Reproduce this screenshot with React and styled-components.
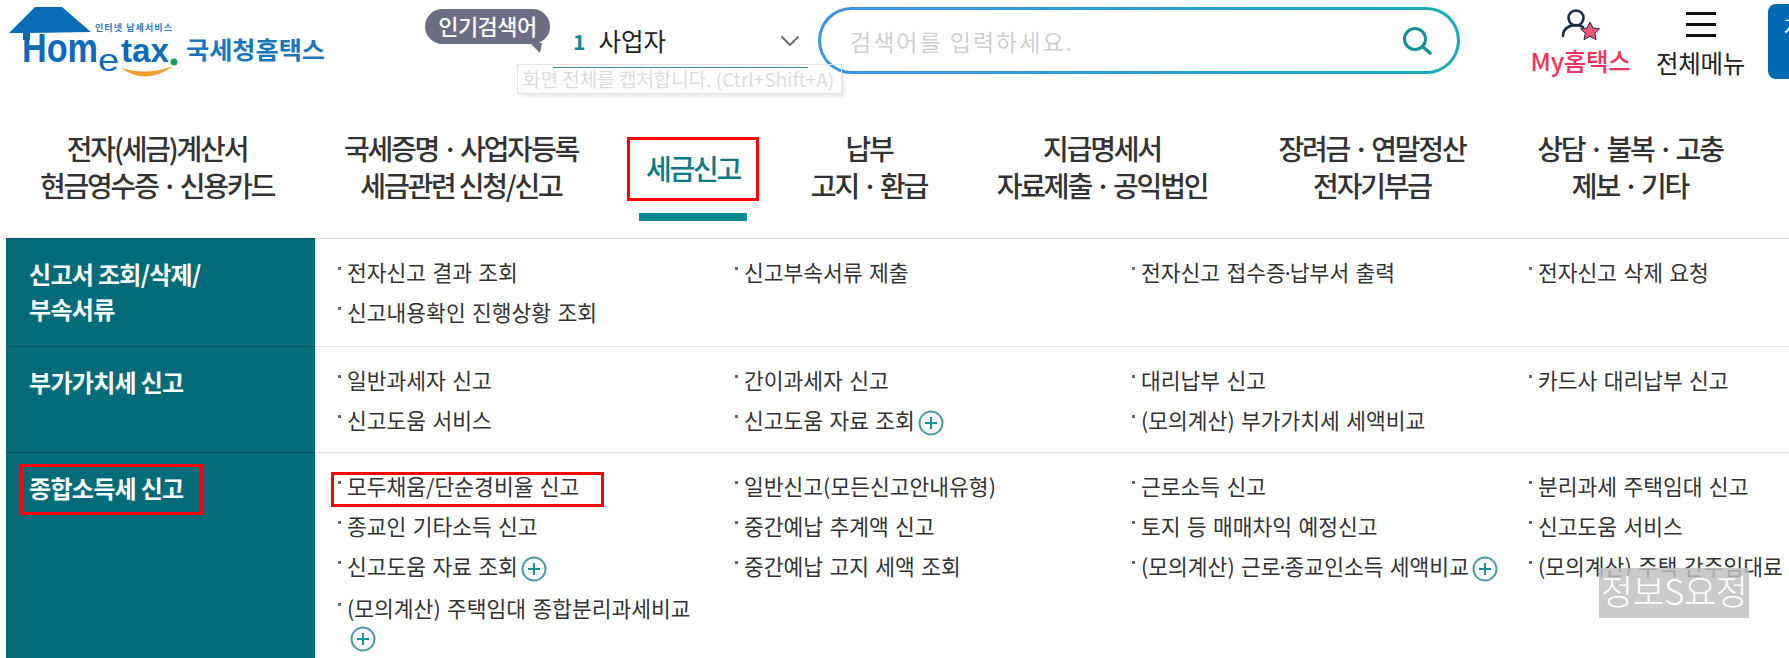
import React from 'react'
import styled, { createGlobalStyle } from 'styled-components'

const FONT = `"Noto Sans CJK KR", "Noto Sans", "Liberation Sans", sans-serif`

const GlobalStyle = createGlobalStyle`
  html, body {
    margin: 0;
    height: 658px;
    overflow: hidden;
    background: #fff;
    font-family: ${FONT};
  }
`

const Page = styled.div`
  width: 1789px;
  height: 658px;
  overflow: hidden;
  position: relative;
`

const Header = styled.header`
  display: flex;
  align-items: flex-start;
  height: 130px;
`

const LogoMark = styled.svg`
  display: block;
  flex: none;
  width: 330px;
  height: 84px;
`

const Bubble = styled.div`
  position: relative;
  flex: none;
  width: 125px;
  height: 35px;
  margin: 9px 0 0 95px;
  border-radius: 18px;
  background: #6b6d85;
  color: #fff;
  font-size: 22px;
  font-weight: 500;
  line-height: 33px;
  text-align: center;
  letter-spacing: -0.5px;

  &::after {
    content: '';
    position: absolute;
    right: 8px;
    bottom: -9px;
    border-top: 10px solid #6b6d85;
    border-left: 10px solid transparent;
    border-right: 2px solid transparent;
  }
`

const Rolling = styled.div`
  position: relative;
  flex: none;
  display: flex;
  align-items: center;
  box-sizing: border-box;
  width: 255px;
  height: 68px;
  margin-left: 3px;
  padding: 14px 8px 0 20px;
  border-bottom: 1px solid #3d97a8;
`

const RankNo = styled.span`
  color: #0b8a9a;
  font-size: 21px;
  font-weight: 700;
  margin-right: 13px;
`

const RankWord = styled.span`
  flex: 1;
  color: #222;
  font-size: 24.5px;
`

const Tip = styled.div`
  position: absolute;
  left: -36px;
  top: 64px;
  box-sizing: border-box;
  width: 325px;
  height: 30px;
  padding-left: 5px;
  border: 1px solid #e4e4e4;
  box-shadow: 3px 3px 3px rgba(0, 0, 0, 0.08);
  color: #dcdcdc;
  font-size: 19px;
  line-height: 27px;
  white-space: nowrap;
`

const Search = styled.div`
  flex: none;
  display: flex;
  align-items: center;
  justify-content: space-between;
  box-sizing: border-box;
  width: 642px;
  height: 67px;
  margin: 7px 0 0 10px;
  padding: 0 25px 0 29px;
  border: 3px solid transparent;
  border-radius: 34px;
  background: linear-gradient(#fff, #fff) padding-box,
    linear-gradient(90deg, #3b94e6, #15adbb) border-box;
`

const Placeholder = styled.span`
  color: #cfcfcf;
  font-size: 23px;
  letter-spacing: 2px;
`

const IconBlock = styled.div`
  flex: none;
  display: flex;
  flex-direction: column;
  align-items: center;
  width: ${({ $w }) => $w}px;
  margin: 8px 0 0 ${({ $ml }) => $ml}px;
`

const IconLabel = styled.span`
  margin-top: ${({ $mt }) => $mt}px;
  color: ${({ $red }) => ($red ? '#f0325e' : '#222')};
  font-size: 24.5px;
  font-weight: ${({ $red }) => ($red ? 500 : 400)};
  line-height: 30px;
  white-space: nowrap;
  letter-spacing: -0.3px;
`

const MenuLines = styled.div`
  display: flex;
  flex-direction: column;
  gap: 8px;
  width: 30px;
  margin-top: 4px;

  i {
    display: block;
    height: 3px;
    background: #111;
  }
`

const CornerButton = styled.div`
  flex: none;
  box-sizing: border-box;
  width: 60px;
  height: 75px;
  margin: 4px 0 0 23px;
  padding: 8px 0 0 16px;
  border-radius: 8px;
  background: #0069b4;
  color: #fff;
  font-size: 20px;
`

const Nav = styled.nav`
  display: grid;
  grid-template-columns: 304px 304px 160px 192px 274px 266px 250px;
  height: 108px;
  margin-left: 5px;
`

const NavItem = styled.div`
  display: flex;
  flex-direction: column;
  align-items: center;
  color: #333;
  font-size: 28px;
  font-weight: 500;
  line-height: 37px;
  letter-spacing: -2.2px;
  text-align: center;
  white-space: nowrap;
`

const NavLabel = styled.div`
  white-space: pre-line;
`

const ActiveBox = styled.div`
  box-sizing: border-box;
  width: 132px;
  height: 64px;
  margin-top: 7px;
  border: 3px solid #f00;
  color: #0b7a85;
  line-height: 56px;
`

const ActiveBar = styled.div`
  width: 108px;
  height: 8px;
  margin-top: 12px;
  background: #008a94;
`

const Section = styled.section`
  display: grid;
  grid-template-columns: 309px 1fr;
  margin-left: 6px;
`

const Label = styled.h3`
  position: relative;
  box-sizing: border-box;
  margin: 0;
  padding: 17px 0 0 23px;
  border-top: 1px solid #0a4f57;
  background: #036c78;
  color: #fff;
  font-size: 24px;
  font-weight: 700;
  line-height: 35px;
  letter-spacing: -0.7px;
  white-space: pre-line;
`

const Marked = styled.span`
  &::after {
    content: '';
    position: absolute;
    left: 14px;
    top: 11px;
    width: 183px;
    height: 51px;
    box-sizing: border-box;
    border: 3px solid #f00;
  }
`

const List = styled.ul`
  display: grid;
  grid-template-columns: repeat(4, 397px);
  align-content: start;
  margin: 0;
  padding: 13px 0 ${({ $pb }) => $pb}px 22px;
  border-top: 1px solid #ddd;
  list-style: none;
`

const Item = styled.li`
  position: relative;
  display: flex;
  box-sizing: border-box;
  padding: 6px 24px 6px 0;
  color: #333;
  font-size: 21.5px;
  word-spacing: 1.5px;
  line-height: 28px;
  min-height: 40px;

  ${({ $marked }) =>
    $marked &&
    `
    &::after {
      content: '';
      position: absolute;
      left: -6px;
      top: 6px;
      width: 273px;
      height: 35px;
      box-sizing: border-box;
      border: 3px solid #f00;
    }
  `}
`

const Bullet = styled.i`
  flex: none;
  width: 3px;
  height: 3px;
  margin: 9px 6px 0 1px;
  background: #666;
`

const ItemText = styled.span`
  white-space: ${({ $nowrap }) => ($nowrap ? 'nowrap' : 'normal')};
`

const TightDot = styled.span`
  margin: 0 -4px;
`

const PlusIcon = styled.svg`
  display: inline-block;
  width: 26px;
  height: 26px;
  margin-left: 3px;
  vertical-align: -7px;
`

const Stamp = styled.div`
  position: absolute;
  left: 1599px;
  top: 568px;
  width: 150px;
  height: 50px;
  background: rgba(190, 190, 190, 0.82);
  color: #fff;
  font-size: 35px;
  font-weight: 300;
  line-height: 44px;
  text-align: center;
  white-space: nowrap;
  letter-spacing: -0.5px;
`

const Logo = () => (
  <LogoMark viewBox="0 0 330 84">
    <polygon points="35,7 62,7 91,32 30,33 30,40 23,40 23,33 9,33" fill="#0a6cb8" />
    <path d="M121 68 Q147 86 173 66 Q147 76 121 68 Z" fill="#f0a030" />
    <circle cx="174" cy="62" r="3.5" fill="#1aa053" />
    <text x="95" y="31" fontSize="9" fontWeight="700" fill="#2a7cc4" fontFamily={FONT} textLength="77">
      인터넷 납세서비스
    </text>
    <text x="22" y="62" fontSize="40" fontWeight="700" fill="#0a6cb8" fontFamily="'Liberation Sans', sans-serif" textLength="76" lengthAdjust="spacingAndGlyphs">
      Hom
    </text>
    <text x="98" y="71" fontSize="32" fontWeight="400" fill="#0a6cb8" fontFamily="'Liberation Sans', sans-serif" textLength="21" lengthAdjust="spacingAndGlyphs">
      e
    </text>
    <text x="121" y="62" fontSize="34" fontWeight="700" fill="#0a6cb8" fontFamily="'Liberation Sans', sans-serif" textLength="48" lengthAdjust="spacingAndGlyphs">
      tax
    </text>
    <text x="186" y="59" fontSize="24" fontWeight="700" fill="#1a75bb" fontFamily={FONT} textLength="139" lengthAdjust="spacingAndGlyphs">
      국세청홈택스
    </text>
  </LogoMark>
)

const Plus = () => (
  <PlusIcon viewBox="0 0 26 26">
    <circle cx="13" cy="13" r="11.5" fill="#fff" stroke="#4d9ba6" strokeWidth="2" />
    <path d="M13 7v12M7 13h12" stroke="#12909c" strokeWidth="2" fill="none" />
  </PlusIcon>
)

// the font's middle dot is wide, so it gets pulled in between the words
const withTightDots = (text) =>
  text.split('·').flatMap((part, i) =>
    i === 0 ? [part] : [<TightDot key={i}>·</TightDot>, part]
  )

const sections = [
  {
    label: '신고서 조회/삭제/\n부속서류',
    pb: 14,
    items: [
      { t: '전자신고 결과 조회' },
      { t: '신고부속서류 제출' },
      { t: '전자신고 접수증·납부서 출력' },
      { t: '전자신고 삭제 요청' },
      { t: '신고내용확인 진행상황 조회' },
    ],
  },
  {
    label: '부가가치세 신고',
    pb: 10,
    items: [
      { t: '일반과세자 신고' },
      { t: '간이과세자 신고' },
      { t: '대리납부 신고' },
      { t: '카드사 대리납부 신고' },
      { t: '신고도움 서비스' },
      { t: '신고도움 자료 조회', plus: true },
      { t: '(모의계산) 부가가치세 세액비교' },
    ],
  },
  {
    label: '종합소득세 신고',
    marked: true,
    pb: 30,
    items: [
      { t: '모두채움/단순경비율 신고', marked: true },
      { t: '일반신고(모든신고안내유형)' },
      { t: '근로소득 신고' },
      { t: '분리과세 주택임대 신고' },
      { t: '종교인 기타소득 신고' },
      { t: '중간예납 추계액 신고' },
      { t: '토지 등 매매차익 예정신고' },
      { t: '신고도움 서비스' },
      { t: '신고도움 자료 조회', plus: true },
      { t: '중간예납 고지 세액 조회' },
      { t: '(모의계산) 근로·종교인소득 세액비교', plus: true },
      { t: '(모의계산) 주택 간주임대료', nowrap: true },
      { t: '(모의계산) 주택임대 종합분리과세비교', plus: true },
    ],
  },
]

const navItems = [
  '전자(세금)계산서\n현금영수증 · 신용카드',
  '국세증명 · 사업자등록\n세금관련 신청/신고',
  null,
  '납부\n고지 · 환급',
  '지급명세서\n자료제출 · 공익법인',
  '장려금 · 연말정산\n전자기부금',
  '상담 · 불복 · 고충\n제보 · 기타',
]

export default function App() {
  return (
    <Page>
      <GlobalStyle />
      <Header>
        <Logo />
        <Bubble>인기검색어</Bubble>
        <Rolling>
          <RankNo>1</RankNo>
          <RankWord>사업자</RankWord>
          <svg width="20" height="12" viewBox="0 0 20 12">
            <path d="M1.5 1.5 10 10l8.5-8.5" fill="none" stroke="#666" strokeWidth="1.8" />
          </svg>
          <Tip>화면 전체를 캡처합니다. (Ctrl+Shift+A)</Tip>
        </Rolling>
        <Search>
          <Placeholder>검색어를 입력하세요.</Placeholder>
          <svg width="30" height="30" viewBox="0 0 30 30">
            <circle cx="13" cy="13" r="10.5" fill="none" stroke="#148f9c" strokeWidth="3" />
            <path d="M21 21l7 6" stroke="#148f9c" strokeWidth="3.5" strokeLinecap="round" />
          </svg>
        </Search>
        <IconBlock $w={99} $ml={71}>
          <svg width="40" height="34" viewBox="0 0 40 34">
            <circle cx="15" cy="10" r="7.5" fill="none" stroke="#1b2a4a" strokeWidth="2.6" />
            <path d="M2 28c0-7 6-11 13-11 3 0 5 .6 7 2" fill="none" stroke="#1b2a4a" strokeWidth="2.6" strokeLinecap="round" />
            <path d="M29 14l3 6 6.6.8-4.8 4.4 1.3 6.5-6.1-3.4-6 3.4 1.3-6.5-4.8-4.4 6.5-.8z" fill="#f0567a" stroke="#1b2a4a" strokeWidth="1" />
          </svg>
          <IconLabel $red $mt={4}>My홈택스</IconLabel>
        </IconBlock>
        <IconBlock $w={89} $ml={26}>
          <MenuLines><i /><i /><i /></MenuLines>
          <IconLabel $mt={11}>전체메뉴</IconLabel>
        </IconBlock>
        <CornerButton>자</CornerButton>
      </Header>
      <Nav>
        {navItems.map((text, i) =>
          text ? (
            <NavItem key={i}><NavLabel>{text}</NavLabel></NavItem>
          ) : (
            <NavItem key={i}>
              <ActiveBox>세금신고</ActiveBox>
              <ActiveBar />
            </NavItem>
          )
        )}
      </Nav>
      {sections.map((s) => (
        <Section key={s.label}>
          <Label>{s.marked ? <Marked>{s.label}</Marked> : s.label}</Label>
          <List $pb={s.pb}>
            {s.items.map((it, i) => (
              <Item key={i} $marked={it.marked}>
                <Bullet />
                <ItemText $nowrap={it.nowrap}>
                  {withTightDots(it.t)}
                  {it.plus && <Plus />}
                </ItemText>
              </Item>
            ))}
          </List>
        </Section>
      ))}
      <Stamp>정보S요정</Stamp>
    </Page>
  )
}
